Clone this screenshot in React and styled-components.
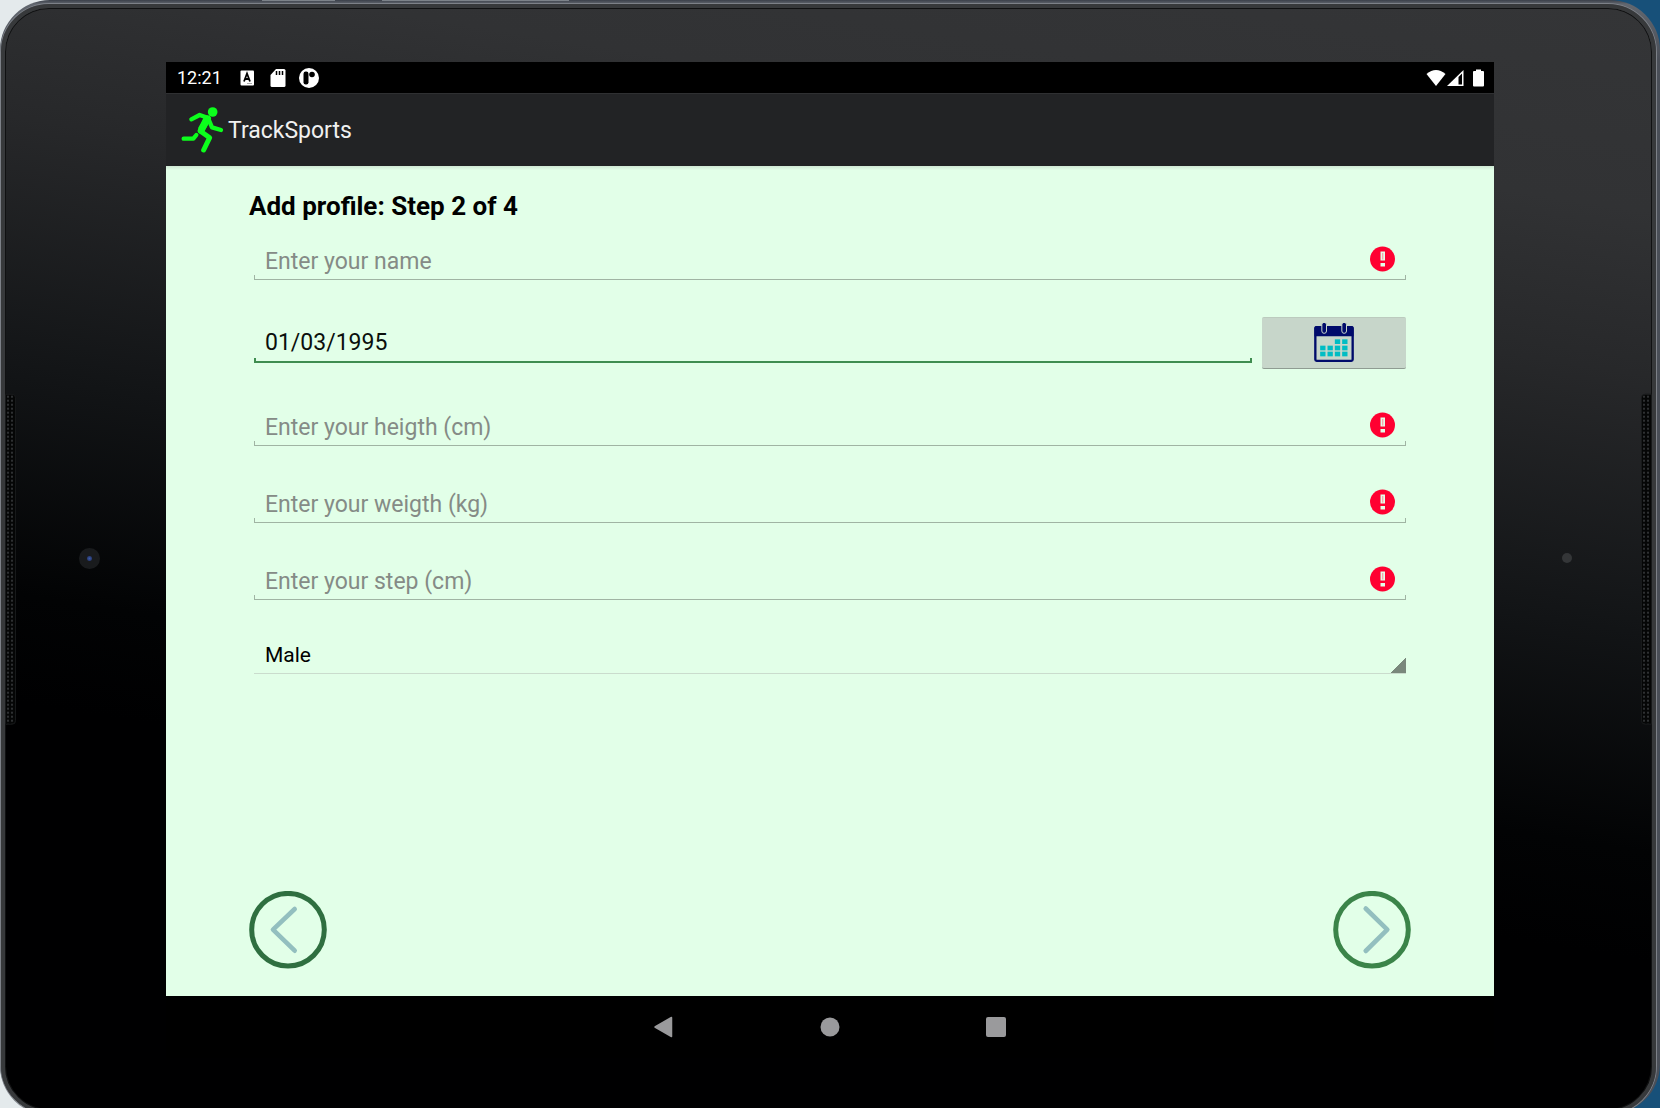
import React, { useState } from "react";
import styled, { createGlobalStyle } from "styled-components";

const GlobalStyle = createGlobalStyle`
  *, *::before, *::after { box-sizing: border-box; }
  body { margin: 0; background: #e4eaec; }
  body, button, input, select { font-family: Roboto, "Noto Sans", sans-serif; }
`;

/* ---------- tablet shell ---------- */

const Desktop = styled.div`
  display: flex;
  flex-direction: column;
  min-height: 100vh;
  overflow: clip;
  background: linear-gradient(to right, #e4eaec 50%, #175079 50%);
`;

const Frame = styled.div`
  position: relative;
  display: flex;
  flex: 1;
  margin-bottom: -6px;
  padding: 4px 4px 0 1px;
  border-radius: 50px;
  background: linear-gradient(to bottom, #3b404a, #62676f 4px, #4a4f58 60px);
`;

const SideKey = styled.span`
  position: absolute;
  top: 0;
  left: ${(p) => p.$left};
  width: ${(p) => p.$width};
  height: 1px;
  background: #7c8289;
`;

const Glass = styled.div`
  position: relative;
  flex: 1;
  display: grid;
  grid-template-columns: 1fr 80vw 1fr;
  padding: 54px 0 52px 3px;
  border: 4px solid #37393b;
  border-radius: 48px;
  box-shadow: 0 0 0 1px #7d8188, inset 0 0 0 1px #101112;
  background: linear-gradient(
    189deg,
    #343537 0%,
    #313234 15%,
    #27282a 27%,
    #121416 46%,
    #020304 62%,
    #000001 70%
  );
`;

const Speaker = styled.span`
  position: absolute;
  top: 50%;
  ${(p) => p.$side}: 0;
  width: 11px;
  height: 30%;
  transform: translateY(-50%);
  border: 1px solid #17191a;
  border-radius: ${(p) => (p.$side === "left" ? "0 4px 4px 0" : "4px 0 0 4px")};
  background: radial-gradient(circle, #2e3032 1px, #050606 1px) 0 0 / 4px 4px;
`;

const Bezel = styled.div`
  display: flex;
  align-items: center;
  justify-content: center;
  padding: ${(p) => (p.$side === "left" ? "0 0 4px 4px" : "0 12px 4px 0")};
`;

const Camera = styled.span`
  width: 21px;
  height: 21px;
  border-radius: 50%;
  background: radial-gradient(circle, #3c5ba8 0, #2a3e78 2px, #191b1d 3px);
`;

const Sensor = styled.span`
  width: 10px;
  height: 10px;
  border-radius: 50%;
  background: #343638;
`;

/* ---------- screen ---------- */

const Screen = styled.div`
  display: flex;
  flex-direction: column;
  background: #000;
`;

const StatusBar = styled.div`
  display: flex;
  align-items: center;
  justify-content: space-between;
  height: 31px;
  padding: 0 10px 0 11px;
  color: #fff;
`;

const StatusGroup = styled.div`
  display: flex;
  align-items: center;
  gap: ${(p) => p.$gap};
`;

const Clock = styled.time`
  margin-right: 4px;
  font-size: 18px;
  line-height: 20px;
`;

const AppBar = styled.header`
  display: flex;
  align-items: center;
  gap: 3px;
  height: 73px;
  padding-left: 14px;
  border-top: 1px solid #2f3032;
  background: #222325;
`;

const AppTitle = styled.span`
  padding-top: 2px;
  color: #f0f0f0;
  font-size: 23px;
  line-height: 28px;
`;

const Content = styled.main`
  display: flex;
  flex: 1;
  flex-direction: column;
  padding: 25px 6.25% 27px;
  background: linear-gradient(to bottom, #cfe8d4, #e2ffe8 4px);
`;

const Heading = styled.h1`
  margin: 0 0 19px;
  color: #000;
  font-size: 26px;
  font-weight: 700;
  line-height: 30px;
`;

const Form = styled.form`
  display: flex;
  flex: 1;
  flex-direction: column;
`;

const Fields = styled.div`
  display: flex;
  flex-direction: column;
  gap: 37px;
  padding: 0 5px;
`;

const Field = styled.div`
  --line: ${(p) => (p.$active ? "#3f8d50" : "#a0b4a3")};
  --weight: ${(p) => (p.$active ? "2px" : "1px")};
  display: flex;
  flex: 1;
  align-items: flex-start;
  height: 40px;
  padding: 0 11px;
  background:
    linear-gradient(var(--line), var(--line)) left bottom / 100% var(--weight),
    linear-gradient(var(--line), var(--line)) left bottom / var(--weight) 5px,
    linear-gradient(var(--line), var(--line)) right bottom / var(--weight) 5px;
  background-repeat: no-repeat;
`;

const TextInput = styled.input`
  flex: 1;
  min-width: 0;
  height: 40px;
  padding: 2px 0 0;
  border: 0;
  outline: 0;
  background: transparent;
  color: #0b0f0c;
  font-size: 23px;
  line-height: 28px;
  &::placeholder { color: #858b86; opacity: 1; }
`;

const DateInput = styled(TextInput)`
  padding: 0 0 2px;
`;

const DateRow = styled.div`
  display: flex;
  gap: 10px;
  align-items: center;
`;

const CalendarButton = styled.button`
  display: flex;
  align-items: center;
  justify-content: center;
  width: 144px;
  height: 52px;
  padding: 0 0 2px;
  border: 0;
  border-top: 1px solid #bccbbe;
  border-bottom: 1px solid #8f9c92;
  border-radius: 2px;
  background: #c7d6ca;
`;

const SexSelect = styled.select`
  appearance: none;
  width: 100%;
  height: 37px;
  padding: 0 24px 0 11px;
  border: 0;
  border-bottom: 1px solid #cadccd;
  border-radius: 0;
  outline: 0;
  background: linear-gradient(135deg, transparent 50%, #7a887c 50%) right bottom / 16px 16px no-repeat border-box;
  color: #000;
  font-size: 21px;
`;

const Pager = styled.div`
  display: flex;
  justify-content: space-between;
  margin-top: auto;
`;

const RoundButton = styled.button`
  display: flex;
  width: 78px;
  height: 78px;
  padding: 0;
  border: 0;
  border-radius: 50%;
  background: transparent;
`;

const NavBar = styled.nav`
  display: flex;
  align-items: center;
  justify-content: center;
  gap: 118px;
  height: 62px;
`;

const NavButton = styled.button`
  display: flex;
  align-items: center;
  justify-content: center;
  width: 48px;
  height: 48px;
  padding: 0;
  border: 0;
  background: transparent;
  color: #9a9a9c;
`;

/* ---------- drawings ---------- */

const LetterIcon = () => (
  <svg width="20" height="20" viewBox="0 0 20 20">
    <rect x="3.500" y="2.500" width="13.500" height="15" rx="1" fill="#fff" />
    <path d="M7 13.500l3-8 3 8M8 11h4" fill="none" stroke="#000" strokeWidth="1.8" />
    <path d="M10 15.500h5" stroke="#aaa" />
  </svg>
);

const CardIcon = () => (
  <svg width="20" height="20" viewBox="0 0 20 20">
    <path d="M8 1h8q1.500 0 1.500 1.500v15q0 1.500-1.500 1.500H4q-1.500 0-1.500-1.500V7z" fill="#fff" />
    <path d="M8.500 3v4M11.500 3v4M14.500 3v4" stroke="#000" strokeWidth="1.5" />
  </svg>
);

const DiscIcon = () => (
  <svg width="20" height="20" viewBox="0 0 20 20">
    <circle cx="10" cy="10" r="10" fill="#fff" />
    <rect x="4.500" y="3.500" width="5" height="13" rx="2.200" fill="#000" />
    <circle cx="13" cy="6.500" r="2.800" fill="#000" />
  </svg>
);

const WifiIcon = () => (
  <svg width="20" height="18" viewBox="0 0 20 18">
    <path d="M0.500 5Q10-3 19.500 5L10 17z" fill="#fff" />
  </svg>
);

const SignalIcon = () => (
  <svg width="17" height="18" viewBox="0 0 17 18">
    <path d="M0 17L16.500 1v16z" fill="#fff" />
    <path d="M11.500 8l3.500-3.500V15.500h-3.500z" fill="#000" />
  </svg>
);

const BatteryIcon = () => (
  <svg width="11" height="18" viewBox="0 0 11 18">
    <path d="M3 0.500h5v1.500h2q1 0 1 1v13.500q0 1-1 1H1q-1 0-1-1v-13.500q0-1 1-1h2z" fill="#fff" />
  </svg>
);

const Runner = () => (
  <svg width="45" height="48" viewBox="60 153 135 144" fill="none" stroke="#0cff1c" strokeLinecap="round" strokeLinejoin="round">
    <circle cx="158" cy="171" r="14.500" fill="#0cff1c" stroke="none" />
    <path d="M94 193l25-13 26 9" strokeWidth="13" />
    <path d="M140 193q-8 17-17 32" strokeWidth="21" strokeLinecap="butt" />
    <path d="M143 191l-20 36" strokeWidth="20" />
    <path d="M147 196l9 21 27 8" strokeWidth="13" />
    <path d="M124 230l25 18-18 37" strokeWidth="15" />
    <path d="M109 240l-9 11H71" strokeWidth="13" />
  </svg>
);

const ErrorIcon = () => (
  <svg width="26" height="40" viewBox="0 0 26 40">
    <circle cx="13.500" cy="19" r="12.500" fill="#ff0031" />
    <path d="M11.500 11.500h4.500v9h-4.500zM11.500 23h4.500v3.500h-4.500z" fill="#e2ffe8" />
    <path d="M13.200 13v6.500h1.100V13z" fill="#ff8f9f" />
  </svg>
);

const CELLS = [
  [314, 329], [336, 329],
  [270, 348], [292, 348], [314, 348], [336, 348],
  [270, 366], [292, 366], [314, 366], [336, 366],
];

const CalendarIcon = () => (
  <svg width="40" height="39" viewBox="252 280 119 117">
    <rect x="255.500" y="292.500" width="112" height="101" rx="4" fill="none" stroke="#000b6b" strokeWidth="7" />
    <path d="M253 320v-26q0-5 5-5h107q5 0 5 5v26z" fill="#000b6b" />
    {[275, 335].map((x) => (
      <rect key={x} x={x} y="278" width="14" height="33" rx="7" fill="#000b6b" stroke="#c7d6ca" strokeWidth="3" />
    ))}
    {CELLS.map(([x, y]) => (
      <rect key={`${x}-${y}`} x={x} y={y} width="16" height="14" fill="#00bdc4" />
    ))}
  </svg>
);

const Chevron = ({ ring, points }) => (
  <svg width="78" height="78" viewBox="0 0 78 78" fill="none">
    <circle cx="39" cy="38.700" r="36.300" stroke={ring} strokeWidth="5" />
    <polyline points={points} stroke="#93bfbf" strokeWidth="4.6" strokeLinecap="round" strokeLinejoin="round" />
  </svg>
);

/* ---------- app ---------- */

function RequiredField({ label, value, onChange }) {
  return (
    <Field>
      <TextInput aria-label={label} placeholder={label} value={value} onChange={onChange} />
      {value === "" && <ErrorIcon />}
    </Field>
  );
}

export default function App() {
  const [profile, setProfile] = useState({
    name: "", birth: "01/03/1995", height: "", weight: "", step: "", sex: "Male",
  });
  const update = (key) => (e) => setProfile({ ...profile, [key]: e.target.value });

  return (
    <Desktop>
      <GlobalStyle />
      <Frame>
        <SideKey $left="15.8%" $width="4.4%" />
        <SideKey $left="23%" $width="11.3%" />
        <Glass>
          <Speaker $side="left" />
          <Speaker $side="right" />
          <Bezel $side="left"><Camera /></Bezel>
          <Screen>
            <StatusBar>
              <StatusGroup $gap="11px">
                <Clock>12:21</Clock>
                <LetterIcon />
                <CardIcon />
                <DiscIcon />
              </StatusGroup>
              <StatusGroup $gap="9px">
                <StatusGroup $gap="1px">
                  <WifiIcon />
                  <SignalIcon />
                </StatusGroup>
                <BatteryIcon />
              </StatusGroup>
            </StatusBar>
            <AppBar>
              <Runner />
              <AppTitle>TrackSports</AppTitle>
            </AppBar>
            <Content>
              <Heading>Add profile: Step 2 of 4</Heading>
              <Form onSubmit={(e) => e.preventDefault()}>
                <Fields>
                  <RequiredField label="Enter your name" value={profile.name} onChange={update("name")} />
                  <DateRow>
                    <Field $active>
                      <DateInput aria-label="Date of birth" value={profile.birth} onChange={update("birth")} />
                    </Field>
                    <CalendarButton type="button" aria-label="Pick a date"><CalendarIcon /></CalendarButton>
                  </DateRow>
                  <RequiredField label="Enter your heigth (cm)" value={profile.height} onChange={update("height")} />
                  <RequiredField label="Enter your weigth (kg)" value={profile.weight} onChange={update("weight")} />
                  <RequiredField label="Enter your step (cm)" value={profile.step} onChange={update("step")} />
                  <SexSelect aria-label="Sex" value={profile.sex} onChange={update("sex")}>
                    <option>Male</option>
                    <option>Female</option>
                  </SexSelect>
                </Fields>
                <Pager>
                  <RoundButton type="button" aria-label="Previous step">
                    <Chevron ring="#2f6f40" points="45.700,18 24,38.700 45.700,59.700" />
                  </RoundButton>
                  <RoundButton type="submit" aria-label="Next step">
                    <Chevron ring="#3b8449" points="32.700,17.500 54.300,38.700 32.700,60" />
                  </RoundButton>
                </Pager>
              </Form>
            </Content>
            <NavBar>
              <NavButton type="button" aria-label="Back">
                <svg width="20" height="22" viewBox="0 0 20 22">
                  <path d="M1 11L17.500 1.500v19z" fill="currentColor" stroke="currentColor" strokeWidth="1.500" strokeLinejoin="round" />
                </svg>
              </NavButton>
              <NavButton type="button" aria-label="Home">
                <svg width="20" height="20" viewBox="0 0 20 20">
                  <circle cx="10" cy="10" r="9.500" fill="currentColor" />
                </svg>
              </NavButton>
              <NavButton type="button" aria-label="Recent apps">
                <svg width="20" height="20" viewBox="0 0 20 20">
                  <rect width="20" height="20" rx="2" fill="currentColor" />
                </svg>
              </NavButton>
            </NavBar>
          </Screen>
          <Bezel $side="right"><Sensor /></Bezel>
        </Glass>
      </Frame>
    </Desktop>
  );
}
